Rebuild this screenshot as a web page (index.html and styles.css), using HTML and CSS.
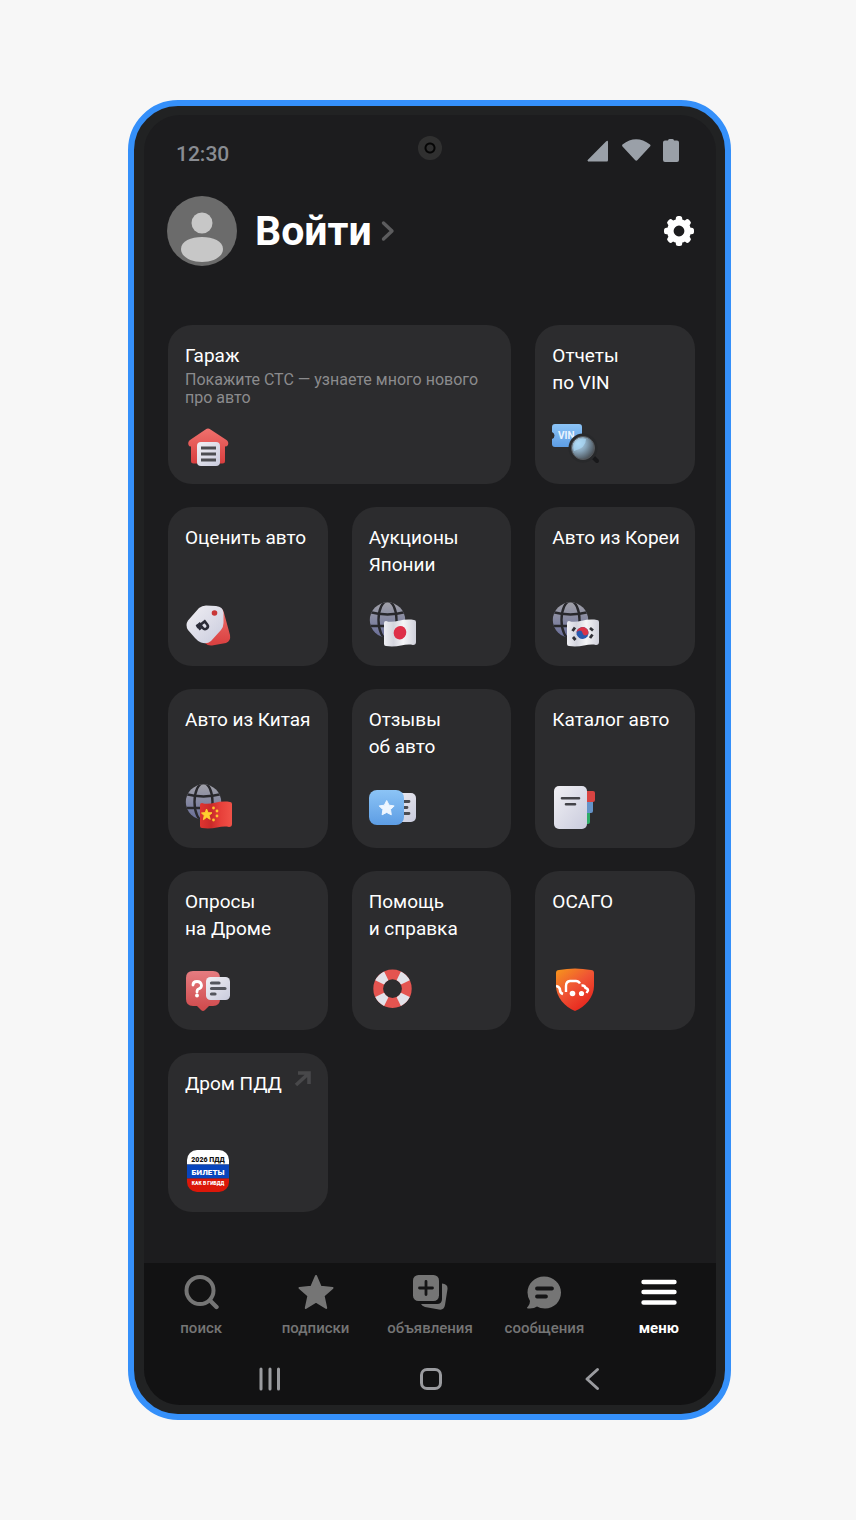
FILE: index.html
```html
<!DOCTYPE html>
<html lang="ru">
<head>
<meta charset="utf-8">
<meta name="viewport" content="width=device-width, initial-scale=1">
<title>Меню</title>
<link rel="stylesheet" href="styles.css">
</head>
<body>
<svg class="defs" width="0" height="0" aria-hidden="true">
  <defs>
    <linearGradient id="red" x1="0" y1="0" x2="0" y2="1"><stop offset="0" stop-color="#f0716d"/><stop offset="1" stop-color="#d93f3f"/></linearGradient>
    <linearGradient id="rose" x1="0" y1="0" x2="0" y2="1"><stop offset="0" stop-color="#e57c80"/><stop offset="1" stop-color="#cf494b"/></linearGradient>
    <linearGradient id="blue" x1="0" y1="0" x2="0" y2="1"><stop offset="0" stop-color="#8cc4f6"/><stop offset="1" stop-color="#5d9de4"/></linearGradient>
    <linearGradient id="paper" x1="0" y1="0" x2="1" y2="1"><stop offset="0" stop-color="#f1f0f4"/><stop offset="1" stop-color="#c9cbdd"/></linearGradient>
    <linearGradient id="cloth" x1="0" y1="0" x2="1" y2="0"><stop offset="0" stop-color="#eeeef3"/><stop offset=".3" stop-color="#d4d5de"/><stop offset=".6" stop-color="#f5f5f7"/><stop offset="1" stop-color="#cfd0da"/></linearGradient>
    <linearGradient id="redcloth" x1="0" y1="0" x2="1" y2="0"><stop offset="0" stop-color="#df3530"/><stop offset=".35" stop-color="#c92a2a"/><stop offset=".65" stop-color="#e8403a"/><stop offset="1" stop-color="#f05248"/></linearGradient>
    <linearGradient id="earth" x1="0" y1="0" x2="0" y2="1"><stop offset="0" stop-color="#a3a3a9"/><stop offset="1" stop-color="#666b98"/></linearGradient>
    <linearGradient id="shield" x1="0" y1="0" x2=".7" y2="1"><stop offset="0" stop-color="#f79a1a"/><stop offset=".5" stop-color="#ef5434"/><stop offset="1" stop-color="#e6221c"/></linearGradient>
    <radialGradient id="lens" cx=".3" cy=".3" r=".8"><stop offset="0" stop-color="#b9dcf5"/><stop offset=".45" stop-color="#86a3b8"/><stop offset="1" stop-color="#43474c"/></radialGradient>
    <clipPath id="app"><rect x="2" y="3" width="42" height="42" rx="10"/></clipPath>
    <clipPath id="shield-clip"><path d="M4 8Q4 5 7 5Q23 2 39 5Q42 5 42 8V21C42 32 33 42 23 46C13 42 4 32 4 21Z"/></clipPath>
    <clipPath id="earth-clip"><circle cx="18.500" cy="19" r="17.700"/></clipPath>
    <symbol id="globe" viewBox="0 0 48 48">
      <g clip-path="url(#earth-clip)"><rect width="38" height="38" fill="url(#earth)"/>
      <g fill="none" stroke="#28282c" stroke-width="2.400"><ellipse cx="18.500" cy="19" rx="9" ry="19"/><path d="M0 11Q18.500 16 37 11M0 25H37"/></g></g>
    </symbol>
    <symbol id="flag" viewBox="0 0 48 48"><path d="M15 22Q15 20 17 20C25 23 32 17 45 19Q47 19 47 21V41Q47 44 44 44C36 42 29 47 17 45Q15 45 15 43Z"/></symbol>
  </defs>
</svg>

<main class="phone">
  <div class="camera" aria-hidden="true"></div>
  <div class="screen">
    <div class="status">
      <span>12:30</span>
      <svg width="92" height="24" viewBox="0 0 92 24" fill="#9aa0a8" aria-hidden="true">
        <path d="M1 22Q0 22 .7 21L19 2.500Q21 1 21 3V21Q21 22.500 20 22.500H1Z"/>
        <path d="M35.500 5.500Q49-5 63 5.500Q64 6.500 63 7.500L50.500 21Q49.300 22.400 48 21L35.500 7.500Q34.700 6.500 35.500 5.500Z"/>
        <path d="M78 1.500H81Q81 0 82.500 0H85.500Q87 0 87 1.500H90Q92 1.500 92 3.500V21Q92 23 90 23H78Q76 23 76 21V3.500Q76 1.500 78 1.500Z"/>
      </svg>
    </div>

    <header class="header">
      <a class="login" href="#login">
        <svg width="70" height="70" viewBox="0 0 70 70" aria-hidden="true"><circle cx="35" cy="35" r="35" fill="#6b6b6b"/><circle cx="35" cy="27" r="10.500" fill="#c7c7c7"/><path d="M14 53C14 45 24 41 35 41S56 45 56 53C56 61 46 66 35 66S14 61 14 53Z" fill="#c7c7c7"/></svg>
        <h1>Войти</h1>
        <svg class="chevron" width="14" height="22" viewBox="0 0 14 22" aria-hidden="true"><path d="M2.500 3L11 11L2.500 19" fill="none" stroke="#5c5c5e" stroke-width="3.400" stroke-linecap="round" stroke-linejoin="round"/></svg>
      </a>
      <button class="settings" type="button" aria-label="Настройки">
        <svg width="30" height="30" viewBox="0 0 30 30" aria-hidden="true"><g fill="#fff"><path fill-rule="evenodd" d="M15 3A12 12 0 1 0 15 27A12 12 0 1 0 15 3ZM15 9.600A5.400 5.400 0 1 1 15 20.400A5.400 5.400 0 1 1 15 9.600Z"/><g id="teeth"><rect x="11.800" y="0" width="6.400" height="6" rx="2.500"/><rect x="11.800" y="24" width="6.400" height="6" rx="2.500"/><rect y="11.800" x="0" height="6.400" width="6" rx="2.500"/><rect y="11.800" x="24" height="6.400" width="6" rx="2.500"/></g><use href="#teeth" transform="rotate(45 15 15)"/></g></svg>
      </button>
    </header>

    <nav class="cards" aria-label="Разделы">
      <a class="card wide" href="#garage">
        <span class="name">Гараж</span>
        <span class="note">Покажите СТС — узнаете много нового<br>про авто</span>
        <svg class="icon" viewBox="0 0 48 48" aria-hidden="true"><path d="M20.500 10.500Q23 8.500 25.500 10.500L41.500 21Q44 23 43 26Q42 27.500 40 27.500V42Q40 44.500 37.500 44.500H8.500Q6 44.500 6 42V27.500Q4 27.500 3.500 26Q2.500 23 5 21Z" fill="url(#red)"/><rect x="12" y="23" width="23" height="24" rx="4" fill="url(#paper)"/><path d="M16 29H31M16 35H31M16 41H31" stroke="#4c4d51" stroke-width="2.800"/></svg>
      </a>
      <a class="card" href="#vin">
        <span class="name">Отчеты<br>по VIN</span>
        <svg class="icon" viewBox="0 0 48 48" aria-hidden="true"><path d="M3 5H27Q30 5 30 8V25Q30 28 27 28H3Q0 28 0 25V20Q2.500 19 2.500 16.500T0 13V8Q0 5 3 5Z" fill="url(#blue)"/><text x="6" y="20" class="vin">VIN</text><path d="M41 38L45 42" stroke="#18181a" stroke-width="4" stroke-linecap="round"/><circle cx="31" cy="29" r="14.500" fill="#28292b"/><circle cx="31" cy="29" r="11.500" fill="url(#lens)" stroke="#55585c"/><path d="M22 32A9.500 9.500 0 0 1 34 20Q34 29 22 32Z" fill="#a9d8f6" opacity=".7"/></svg>
      </a>
      <a class="card" href="#price">
        <span class="name">Оценить авто</span>
        <svg class="icon" viewBox="0 0 48 48" aria-hidden="true"><path d="M33 6Q38 7 39 12L45 34Q46 40 41 42L27 44.500Q23 45 20 42Z" fill="url(#red)"/><path d="M14 7Q17 4.500 21 4.500L31 5Q38 5.500 38.500 12V22Q38.500 26 36 29L26 40Q22 43.500 16 41.500Q13 40.500 10 37L3 29Q0 24 3 19.500Z" fill="url(#paper)"/><circle cx="29.500" cy="12" r="2.800" fill="#c93636"/><g transform="rotate(52 17.500 24) translate(12.500 19)" fill="none" stroke="#2b2c38" stroke-width="2.600"><path d="M3.500 11V1H7.500A2.800 2.800 0 0 1 7.500 6.600H1M1 9.300H7.500"/></g></svg>
      </a>
      <a class="card" href="#japan">
        <span class="name">Аукционы<br>Японии</span>
        <svg class="icon" viewBox="0 0 48 48" aria-hidden="true"><use href="#globe"/><use href="#flag" fill="url(#cloth)"/><ellipse cx="31" cy="31.700" rx="6.300" ry="6.800" fill="#de2f48" transform="rotate(20 31 31.700)"/></svg>
      </a>
      <a class="card" href="#korea">
        <span class="name">Авто из Кореи</span>
        <svg class="icon" viewBox="0 0 48 48" aria-hidden="true"><use href="#globe"/><use href="#flag" fill="url(#cloth)"/><g transform="rotate(-12 30.500 32)"><circle cx="30.500" cy="32" r="6" fill="#2859ad"/><path d="M24.500 32A6 6 0 0 1 36.500 32A3 3 0 0 1 30.500 32A3 3 0 0 0 24.500 32Z" fill="#d93448"/></g><path d="M20.500 30L23 26.500M38 27L41 29.500M21 36L23.500 39M38 37L40.500 33.500" stroke="#303036" stroke-width="2.800"/></svg>
      </a>
      <a class="card" href="#china">
        <span class="name">Авто из Китая</span>
        <svg class="icon" viewBox="0 0 48 48" aria-hidden="true"><use href="#globe"/><use href="#flag" fill="url(#redcloth)"/><path d="M21.500 26L23.100 29.700L27 29.800L24 32.400L25.200 36.300L21.700 34.200L18.400 36.700L19.300 32.600L16.500 30L20.300 29.600Z" fill="#ffd02f" stroke="#ffd02f"/><g fill="#ffc32e"><circle cx="28.500" cy="25" r="1.400"/><circle cx="32" cy="28" r="1.400"/><circle cx="32" cy="33" r="1.400"/><circle cx="28.500" cy="37" r="1.400"/></g></svg>
      </a>
      <a class="card" href="#reviews">
        <span class="name">Отзывы<br>об авто</span>
        <svg class="icon" viewBox="0 0 48 48" aria-hidden="true"><rect x="20" y="10" width="27" height="29" rx="5" fill="url(#paper)"/><path d="M33 18.500H40M33 24.500H38M33 30.500H40" stroke="#4b4c52" stroke-width="2.800" stroke-linecap="round"/><rect y="7" width="35" height="35" rx="8" fill="url(#blue)"/><path d="M17.700 17.500L20.100 22.200L25.200 22.900L21.500 26.600L22.300 31.800L17.700 29.400L13.100 31.800L13.900 26.600L10.200 22.900L15.300 22.200Z" fill="#eef6ff" stroke="#eef6ff" stroke-linejoin="round"/></svg>
      </a>
      <a class="card" href="#catalog">
        <span class="name">Каталог авто</span>
        <svg class="icon" viewBox="0 0 48 48" aria-hidden="true"><rect x="30" y="27" width="8" height="14" rx="2" fill="#2eac68"/><rect x="30" y="17" width="11" height="13" rx="2" fill="#6594c9"/><rect x="30" y="8" width="13" height="11" rx="2" fill="#d94442"/><rect x="2" y="3" width="33" height="43" rx="5" fill="url(#paper)"/><path d="M10 15.300H27M14 21.300H23" stroke="#434348" stroke-width="2.600" stroke-linecap="round"/></svg>
      </a>
      <a class="card" href="#polls">
        <span class="name">Опросы<br>на Дроме</span>
        <svg class="icon" viewBox="0 0 48 48" aria-hidden="true"><path d="M8 6H28Q35 6 35 13V34Q35 41 28 41H24L20 45Q18 47 16 45L12 41H8Q1 41 1 34V13Q1 6 8 6Z" fill="url(#rose)"/><path d="M8 20Q8 16.500 12 16.500T16.500 20.500Q16.500 23 13.500 24Q12 24.500 12 27" fill="none" stroke="#fff" stroke-width="2.800" stroke-linecap="round"/><circle cx="12" cy="30.500" r="1.900" fill="#fff"/><rect x="21" y="12" width="24" height="23" rx="4.500" fill="url(#paper)"/><path d="M26.500 18H34M26.500 23.500H40M26.500 29H30" stroke="#54565d" stroke-width="3.200" stroke-linecap="round"/></svg>
      </a>
      <a class="card" href="#help">
        <span class="name">Помощь<br>и справка</span>
        <svg class="icon" viewBox="0 0 48 48" aria-hidden="true"><circle cx="23.500" cy="23.700" r="14.300" fill="none" stroke="#e45450" stroke-width="9.800"/><circle cx="23.500" cy="23.700" r="14.300" fill="none" stroke="#e2e2e9" stroke-width="9.800" pathLength="360" stroke-dasharray="38 52" stroke-dashoffset="-26"/></svg>
      </a>
      <a class="card" href="#osago">
        <span class="name">ОСАГО</span>
        <svg class="icon" viewBox="0 0 48 48" aria-hidden="true"><g clip-path="url(#shield-clip)"><rect x="3" y="3" width="40" height="44" fill="url(#shield)"/><path d="M4 21Q8 22 8 25Q8 28 11 29" fill="none" stroke="#fff" stroke-width="2.600"/><path d="M14 27V21Q14 16.500 18 16H24Q26.500 16 28 18.500M29.500 20.500Q33 20 33.500 23Q36 23.500 36 25.500L34.500 28" fill="none" stroke="#fff" stroke-width="2.400"/><circle cx="20.500" cy="28.500" r="2.800" fill="#fff"/><circle cx="29.500" cy="28.500" r="2.600" fill="#fff"/></g></svg>
      </a>
      <a class="card" href="#pdd">
        <span class="name">Дром ПДД</span>
        <svg class="arrow" width="18" height="18" viewBox="0 0 18 18" aria-hidden="true"><path d="M2 15L14 4M4 3H15V14" fill="none" stroke="#48484a" stroke-width="3.600"/></svg>
        <svg class="icon" viewBox="0 0 48 48" aria-hidden="true"><g clip-path="url(#app)"><path d="M2 3H44V17.500H2Z" fill="#fff"/><path d="M2 17.500H44V31.500H2Z" fill="#0845bd"/><path d="M2 31.500H44V46H2Z" fill="#dc1709"/></g><g class="app-text"><text x="23" y="15" font-size="7" fill="#111">2026 ПДД</text><text x="23" y="28" font-size="8" fill="#fff">БИЛЕТЫ</text><text x="23" y="38" font-size="5" fill="#fff">КАК В ГИБДД</text></g></svg>
      </a>
    </nav>

    <footer class="bottom">
      <nav class="tabs" aria-label="Основная навигация">
        <a href="#search"><svg viewBox="0 0 36 36" aria-hidden="true"><circle cx="17" cy="16.500" r="13.500" fill="none" stroke="currentColor" stroke-width="4"/><path d="M27 26.500L33.500 33" stroke="currentColor" stroke-width="4.400" stroke-linecap="round"/></svg>поиск</a>
        <a href="#subscriptions"><svg viewBox="0 0 36 36" aria-hidden="true"><path d="M18 2L22.700 12.800L34.500 14L25.600 21.800L28.200 34L18 27.700L7.800 34L10.400 21.800L1.500 14L13.300 12.800Z" fill="currentColor" stroke="currentColor" stroke-width="2" stroke-linejoin="round"/></svg>подписки</a>
        <a href="#ads"><svg viewBox="0 0 36 36" aria-hidden="true"><rect x="1" y="1" width="26" height="26" rx="5.500" fill="currentColor"/><path d="M14 7.500V20.500M7.500 14H20.500" stroke="#151516" stroke-width="2.800" stroke-linecap="round"/><path d="M30 9.500Q36 10 35.500 15L33 31Q32 36.500 27 35.500L13 33Q10 32 9 30H25Q30 30 30 25Z" fill="currentColor"/></svg>объявления</a>
        <a href="#messages"><svg viewBox="0 0 36 36" aria-hidden="true"><path d="M18 2.500C27.500 2.500 35 9.500 35 18.500S28 34.500 19 34.500Q14 34.500 11 32.500Q8 35 2 34.500Q0 34 2 32.500Q4 30 4 27Q1.500 23 1.500 18.500C1.500 9.500 9 2.500 18 2.500Z" fill="currentColor"/><path d="M11 14.500H26M11 22.500H20" stroke="#151516" stroke-width="3.800" stroke-linecap="round"/></svg>сообщения</a>
        <a class="active" href="#menu" aria-current="page"><svg viewBox="0 0 36 36" aria-hidden="true"><path d="M2.500 8H33.500M2.500 18H33.500M2.500 28.500H33.500" stroke="currentColor" stroke-width="4.400" stroke-linecap="round"/></svg>меню</a>
      </nav>
      <div class="system">
        <button type="button" aria-label="Недавние"><svg viewBox="0 0 24 24" aria-hidden="true"><path d="M3 2V22M12 2V22M20.500 2V22"/></svg></button>
        <button type="button" aria-label="Домой"><svg viewBox="0 0 24 24" aria-hidden="true"><rect x="2.500" y="2.500" width="19" height="19" rx="5.500"/></svg></button>
        <button type="button" aria-label="Назад"><svg viewBox="0 0 24 24" aria-hidden="true"><path d="M17.500 2.500L7 12L17.500 21.500"/></svg></button>
      </div>
    </footer>
  </div>
</main>
</body>
</html>
```
FILE: styles.css
```css
* { box-sizing: border-box; }

body {
  margin: 0;
  padding: 100px 125px 100px 128px;
  background: #f7f7f7;
  color: #fff;
  font-family: Roboto, "Liberation Sans", sans-serif;
}

a { color: inherit; text-decoration: none; }
svg { display: block; flex: none; }
.defs { position: absolute; }

button {
  display: grid;
  place-items: center;
  padding: 0;
  border: 0;
  background: none;
  color: inherit;
  font: inherit;
  cursor: pointer;
}

.phone {
  position: relative;
  padding: 9px 9px 9px 10px;
  border: 6px solid #3590fa;
  border-radius: 50px;
  background: #212223;
}

.camera {
  position: absolute;
  top: 30px;
  left: 50%;
  width: 24px;
  height: 24px;
  margin-left: -12px;
  border-radius: 50%;
  background: radial-gradient(circle, #303030 3px, #050505 4px, #050505 5px, #303030 6px);
}

.screen {
  overflow: hidden;
  border-radius: 36px;
  background: #1c1c1e;
}

.status {
  display: flex;
  justify-content: space-between;
  padding: 24px 37px 0 32px;
  color: #898c92;
  font-size: 21px;
  font-weight: 500;
  line-height: 30px;
}

.header {
  display: flex;
  align-items: center;
  justify-content: space-between;
  padding: 27px 22px 0 23px;
}

.login { display: flex; align-items: center; }

.login h1 {
  margin: 0 9px 0 18px;
  font-size: 41px;
  font-weight: 700;
  line-height: 48px;
}

.cards {
  display: grid;
  grid-template-columns: repeat(3, minmax(0, 1fr));
  grid-auto-rows: minmax(159px, auto);
  gap: 23px 24px;
  padding: 59px 21px 51px 24px;
}

.card {
  position: relative;
  display: flex;
  flex-direction: column;
  padding: 17px;
  border-radius: 24px;
  background: #2c2c2e;
}

.wide { grid-column: span 2; }

.name {
  font-size: 19px;
  line-height: 27px;
  white-space: nowrap;
}

.note {
  margin-top: 2px;
  color: #8b8b8d;
  font-size: 16px;
  line-height: 18px;
}

.icon {
  width: 48px;
  height: 48px;
  margin-top: auto;
  overflow: visible;
}

.vin { fill: #e9f4ff; font-size: 10px; font-weight: 700; }
.app-text { font-weight: 900; text-anchor: middle; }

.arrow {
  position: absolute;
  top: 17px;
  right: 16px;
}

.bottom { background: #121213; }

.tabs {
  display: grid;
  grid-template-columns: repeat(5, minmax(0, 1fr));
  padding: 11px 0 10px;
}

.tabs a {
  display: flex;
  flex-direction: column;
  align-items: center;
  gap: 8px;
  color: #757575;
  font-size: 15px;
  font-weight: 500;
  line-height: 20px;
}

.tabs svg { width: 36px; height: 36px; }
.tabs .active { color: #fff; font-weight: 700; }

.system {
  display: grid;
  grid-template-columns: repeat(3, 1fr);
  padding: 19px 43px 14px 45px;
}

.system svg {
  width: 24px;
  height: 24px;
  fill: none;
  stroke: #9a9b9f;
  stroke-width: 3;
  stroke-linecap: round;
  stroke-linejoin: round;
}
```
